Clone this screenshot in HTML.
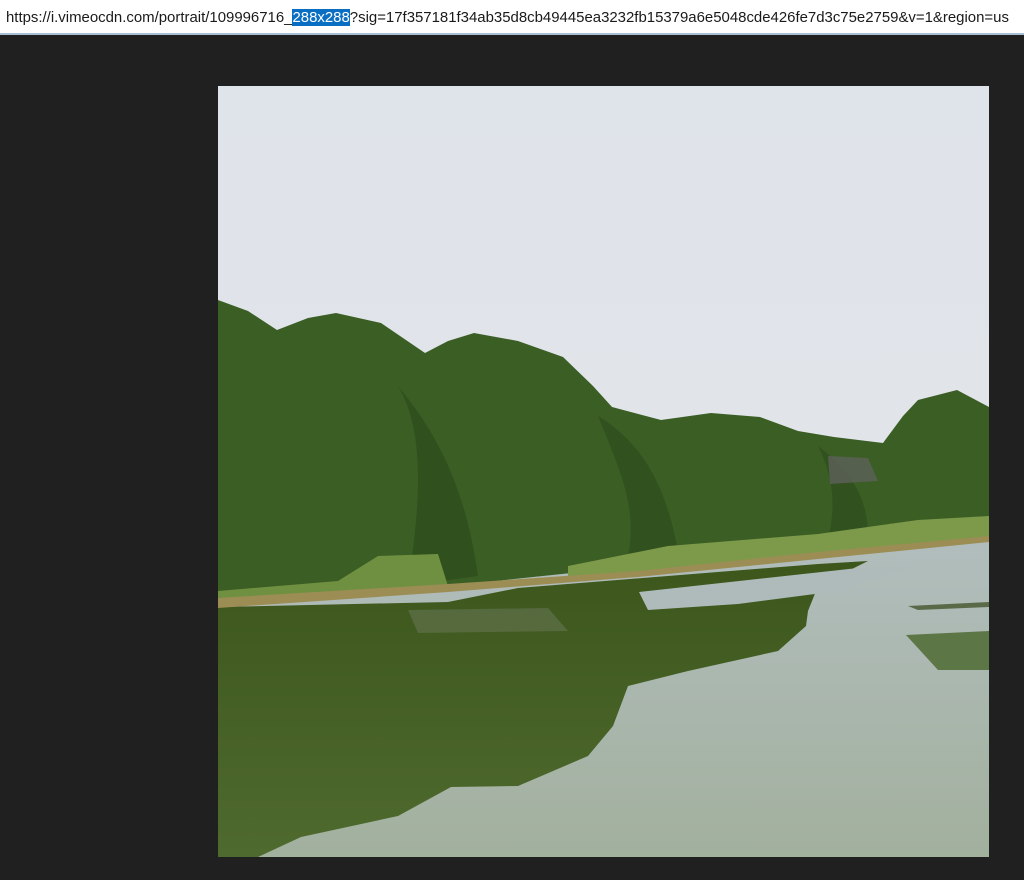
<!DOCTYPE html>
<html><head><meta charset="utf-8"><style>
html,body{margin:0;padding:0;width:1024px;height:880px;background:#202020;overflow:hidden}
#bar{position:absolute;left:0;top:0;width:1024px;height:35px;background:#fff;border-bottom:2px solid #a9bfd3;font-family:"Liberation Sans",sans-serif;font-size:14.95px;line-height:35px;color:#1a1a1a;white-space:nowrap;padding-left:6px;box-sizing:border-box}
#bar span{background:#0a6fc2;color:#fff}
#img{position:absolute;left:218px;top:86px;width:771px;height:771px}
</style></head><body>
<div id="bar">https://i.vimeocdn.com/portrait/109996716_<span>288x288</span>?sig=17f357181f34ab35d8cb49445ea3232fb15379a6e5048cde426fe7d3c75e2759&amp;v=1&amp;region=us</div>
<svg id="img" viewBox="0 0 771 771" xmlns="http://www.w3.org/2000/svg">
<defs>
<linearGradient id="sky" x1="0" y1="0" x2="0" y2="1"><stop offset="0" stop-color="#dfe4ea"/><stop offset="1" stop-color="#e4e6ea"/></linearGradient>
<linearGradient id="water" x1="0" y1="0" x2="0" y2="1"><stop offset="0" stop-color="#b2bebe"/><stop offset="1" stop-color="#a2b09e"/></linearGradient>
<linearGradient id="refl" x1="0" y1="0" x2="0" y2="1"><stop offset="0" stop-color="#3c561c"/><stop offset="1" stop-color="#4f6a2e"/></linearGradient>
</defs>
<rect width="771" height="771" fill="url(#sky)"/>
<rect y="440" width="771" height="331" fill="url(#water)"/>
<!-- reflections -->
<path d="M0 521 L230 516 L300 502 L600 478 L650 475 L600 500 L590 525 L588 540 L560 565 L470 585 L410 600 L395 640 L370 670 L300 700 L233 701 L180 730 L83 751 L40 771 L0 771 Z" fill="url(#refl)"/>
<path d="M421 506 L640 482 L700 479 L620 505 L520 518 L430 524 Z" fill="#aebbba"/>
<path d="M190 524 L330 522 L350 545 L200 547 Z" fill="#5f704c" opacity="0.7"/>
<path d="M688 549 L771 545 L771 584 L720 584 Z" fill="#4f6a33" opacity="0.85"/>
<path d="M690 520 L771 516 L771 521 L700 524 Z" fill="#5a6a48"/>
<!-- trees -->
<path d="M0 214 L30 225 L59 244 L90 232 L118 227 L163 237 L207 267 L230 255 L256 247 L300 255 L345 271 L375 300 L394 321 L443 334 L493 327 L542 331 L580 345 L616 351 L665 357 L685 330 L700 314 L739 304 L771 321 L771 440 L600 460 L420 480 L230 500 L0 520 Z" fill="#3b5e25"/>
<path d="M180 300 C210 350 200 430 190 500 L260 490 C250 420 230 360 180 300 Z" fill="#2c4a1a" opacity="0.7"/>
<path d="M380 330 C400 380 420 420 410 470 L460 465 C450 410 430 360 380 330 Z" fill="#2c4a1a" opacity="0.6"/>
<path d="M600 360 C620 400 615 430 610 455 L650 450 C650 420 640 390 600 360 Z" fill="#2c4a1a" opacity="0.6"/>
<path d="M610 370 L650 372 L660 395 L612 398 Z" fill="#5e605a" opacity="0.8"/>
<!-- reeds -->
<path d="M120 495 L160 470 L220 468 L230 500 L0 520 L0 505 Z" fill="#6f9040"/>
<path d="M350 480 L450 460 L600 448 L700 434 L771 430 L771 452 L600 470 L420 488 L350 495 Z" fill="#7c9a4a"/>
<path d="M0 512 L230 498 L420 485 L600 466 L771 450 L771 456 L600 473 L420 491 L230 506 L0 522 Z" fill="#9c8d55"/>
</svg>
</body></html>
